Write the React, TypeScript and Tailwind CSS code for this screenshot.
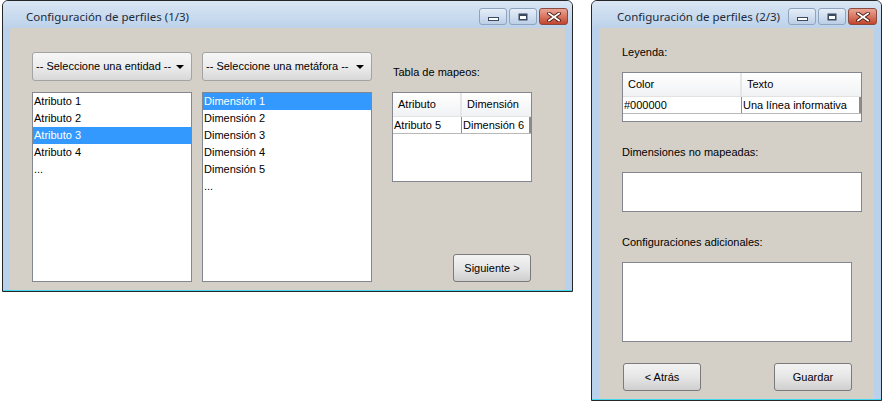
import React from 'react';

const UI = "font-['Liberation_Sans',Arial,sans-serif] text-[11px] leading-[13px] text-black";

function CaptionButtons() {
  return (
    <div className="flex gap-[2px] pt-[7px]">
      <div className="w-[28px] h-[17px] rounded-[3px] border border-[#8ea3bd] bg-gradient-to-b from-[#e6eef8] to-[#bccfe6] flex items-end justify-center pb-[3px]">
        <svg width="11" height="4" viewBox="0 0 11 4">
          <rect x="0.5" y="0.5" width="10" height="3" fill="#fff" stroke="#3b4a5e" />
        </svg>
      </div>
      <div className="w-[28px] h-[17px] rounded-[3px] border border-[#8ea3bd] bg-gradient-to-b from-[#e6eef8] to-[#bccfe6] flex items-center justify-center">
        <svg width="10" height="8" viewBox="0 0 10 8">
          <rect x="0.5" y="0.5" width="9" height="7" fill="#3b4a5e" />
          <rect x="2" y="3" width="6" height="3" fill="#fff" />
        </svg>
      </div>
      <div className="w-[29px] h-[17px] rounded-[3px] border border-[#8a4a3e] bg-gradient-to-b from-[#eaa595] to-[#c3432b] flex items-center justify-center">
        <svg width="14" height="10" viewBox="0 0 14 10">
          <path d="M2 1.5 L12 8.5 M12 1.5 L2 8.5" stroke="#4a1a12" strokeWidth="3.6" strokeLinecap="square" />
          <path d="M2 1.5 L12 8.5 M12 1.5 L2 8.5" stroke="#fff" strokeWidth="1.8" strokeLinecap="square" />
        </svg>
      </div>
    </div>
  );
}

function Window({ title, titlePad, className, children }: { title: string; titlePad: string; className: string; children: React.ReactNode }) {
  return (
    <div className={`flex flex-col border border-[#262626] rounded-t-[6px] bg-[#b9d1ea] ${className}`}>
      <div className="h-[27px] shrink-0 flex pr-[4px] rounded-t-[5px] bg-gradient-to-b from-[#d9e6f4] to-[#bcd2ea]">
        <span className={`${titlePad} pt-[8px] font-['Noto_Sans',sans-serif] text-[11.5px] leading-[15px] text-[#1e2a3a]`}>{title}</span>
        <div className="ml-auto">
          <CaptionButtons />
        </div>
      </div>
      <div className="flex-1 mx-[7px] bg-[#d4d0c8]">{children}</div>
      <div className="h-px bg-[#40d8ee]" />
    </div>
  );
}

function Combo({ label, w }: { label: string; w: string }) {
  return (
    <div className={`${w} h-[29px] rounded-[3px] border border-[#a3a3a3] bg-gradient-to-b from-[#f6f6f6] via-[#ececec] to-[#d8d8d8] flex items-center pl-[3px] pr-[7px]`}>
      <span>{label}</span>
      <svg className="ml-auto" width="8" height="4" viewBox="0 0 8 4">
        <path d="M0 0 H8 L4 4 Z" fill="#000" />
      </svg>
    </div>
  );
}

function ListBox({ items, selected, w }: { items: string[]; selected: number; w: string }) {
  return (
    <div className={`${w} h-[190px] mt-[11px] border border-[#828790] bg-white`}>
      {items.map((it, i) => (
        <div key={i} className={`h-[17px] flex items-center pl-[1px] ${i === selected ? 'bg-[#3399ff] text-white' : ''}`}>
          {it}
        </div>
      ))}
    </div>
  );
}

function Button({ label }: { label: string }) {
  return (
    <div className="w-[78px] h-[28px] rounded-[3px] border border-[#7a7a7a] bg-gradient-to-b from-[#f3f3f3] via-[#e6e6e6] to-[#cfcfcf] flex items-center justify-center">
      {label}
    </div>
  );
}

function Table({ cols, row, w, h, split }: { cols: string[]; row: string[]; w: string; h: string; split: string }) {
  return (
    <div className={`${w} ${h} border border-[#828790] bg-white flex flex-col`}>
      <div className="h-[24px] flex border-b border-[#e2e2e2] bg-gradient-to-b from-[#ffffff] to-[#f1f2f4]">
        <div className={`${split} h-full flex items-center pl-[5px] border-r-2 border-[#e4e6e9]`}>{cols[0]}</div>
        <div className="flex-1 h-full flex items-center pl-[5px]">{cols[1]}</div>
      </div>
      <div className="h-[17px] flex border-b border-[#b8b8b8]">
        <div className={`${split} h-full flex items-center pl-[1px] border-r border-[#8c8c8c]`}>{row[0]}</div>
        <div className="flex-1 h-full flex items-center pl-[1px] border-r-2 border-[#8c8c8c]">{row[1]}</div>
      </div>
    </div>
  );
}

export default function App() {
  return (
    <div className={`w-[886px] h-[406px] bg-white flex items-start gap-[18px] pl-[2px] ${UI}`}>
      <Window title="Configuración de perfiles (1/3)" titlePad="pl-[23px]" className="w-[571px] h-[292px]">
        <div className="flex pl-[22px] pt-[24px]">
          <div className="flex flex-col">
            <Combo label="-- Seleccione una entidad --" w="w-[160px]" />
            <ListBox w="w-[160px]" selected={2} items={['Atributo 1', 'Atributo 2', 'Atributo 3', 'Atributo 4', '...']} />
          </div>
          <div className="flex flex-col ml-[10px]">
            <Combo label="-- Seleccione una metáfora --" w="w-[170px]" />
            <ListBox w="w-[170px]" selected={0} items={['Dimensión 1', 'Dimensión 2', 'Dimensión 3', 'Dimensión 4', 'Dimensión 5', '...']} />
          </div>
          <div className="flex flex-col ml-[20px] w-[140px] h-[230px]">
            <div className="mt-[14px] pl-[1px]">Tabla de mapeos:</div>
            <div className="mt-[13px]">
              <Table cols={['Atributo', 'Dimensión']} row={['Atributo 5', 'Dimensión 6']} w="w-[140px]" h="h-[90px]" split="w-[69px]" />
            </div>
            <div className="mt-auto self-end mr-[1px]">
              <Button label="Siguiente >" />
            </div>
          </div>
        </div>
      </Window>

      <Window title="Configuración de perfiles (2/3)" titlePad="pl-[25px]" className="w-[291px] h-[401px]">
        <div className="flex flex-col pl-[23px] pt-[18px]">
          <div>Leyenda:</div>
          <div className="mt-[13px]">
            <Table cols={['Color', 'Texto']} row={['#000000', 'Una línea informativa']} w="w-[240px]" h="h-[50px]" split="w-[119px]" />
          </div>
          <div className="mt-[24px]">Dimensiones no mapeadas:</div>
          <div className="mt-[13px] w-[240px] h-[40px] border border-[#828790] bg-white" />
          <div className="mt-[24px]">Configuraciones adicionales:</div>
          <div className="mt-[13px] w-[230px] h-[80px] border border-[#828790] bg-white" />
          <div className="mt-[21px] w-[229px] ml-[1px] flex justify-between">
            <Button label="< Atrás" />
            <Button label="Guardar" />
          </div>
        </div>
      </Window>
    </div>
  );
}
